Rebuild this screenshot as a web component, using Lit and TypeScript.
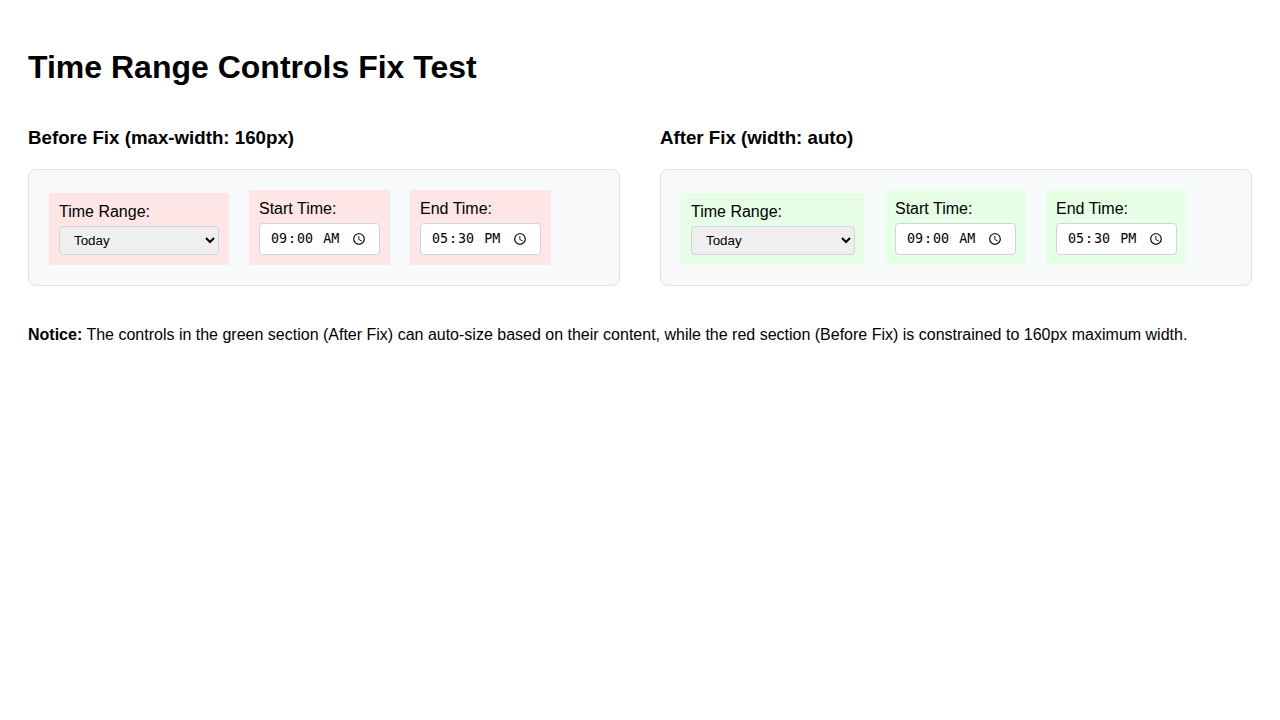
import { LitElement, html, css } from "lit";
import { customElement, property } from "lit/decorators.js";

@customElement("time-range-controls")
class TimeRangeControls extends LitElement {
  @property({ reflect: true }) variant: "before" | "after" = "before";

  static styles = css`
    :host { display: block; }
    .controls {
      display: flex;
      align-items: flex-end;
      gap: 20px;
      padding: 20px;
      border: 1px solid #dee2e6;
      border-radius: 8px;
      background: #f8f9fa;
    }
    .group { padding: 10px; background: #ffe6e6; }
    :host([variant="after"]) .group { background: #e6ffe6; }
    label { display: block; margin-bottom: 5px; }
    select,
    input {
      display: block;
      box-sizing: border-box;
      padding: 5px 10px;
      border: 1px solid #ced4da;
      border-radius: 4px;
    }
    select { width: 160px; }
    :host([variant="after"]) select { width: auto; min-width: 164px; }
  `;

  render() {
    return html`
      <div class="controls">
        <div class="group">
          <label for="range">Time Range:</label>
          <select id="range">
            <option>Today</option>
            <option>Yesterday</option>
            <option>Last 7 Days</option>
            <option>Last 30 Days</option>
            <option>Custom Date Range</option>
          </select>
        </div>
        <div class="group">
          <label for="start">Start Time:</label>
          <input id="start" type="time" value="09:00" />
        </div>
        <div class="group">
          <label for="end">End Time:</label>
          <input id="end" type="time" value="17:30" />
        </div>
      </div>
    `;
  }
}

@customElement("app-root")
class AppRoot extends LitElement {
  static styles = css`
    :host {
      display: block;
      padding: 28px;
      font-family: "Liberation Sans", Arial, sans-serif;
      font-size: 16px;
      color: #000;
    }
    h3 { margin-bottom: 20px; }
    .comparison {
      display: grid;
      grid-template-columns: 1fr 1fr;
      gap: 40px;
    }
    p { margin: 40px 0 0; }
  `;

  render() {
    return html`
      <h1>Time Range Controls Fix Test</h1>
      <div class="comparison">
        <section>
          <h3>Before Fix (max-width: 160px)</h3>
          <time-range-controls variant="before"></time-range-controls>
        </section>
        <section>
          <h3>After Fix (width: auto)</h3>
          <time-range-controls variant="after"></time-range-controls>
        </section>
      </div>
      <p>
        <strong>Notice:</strong> The controls in the green section (After Fix) can auto-size based
        on their content, while the red section (Before Fix) is constrained to 160px maximum width.
      </p>
    `;
  }
}
